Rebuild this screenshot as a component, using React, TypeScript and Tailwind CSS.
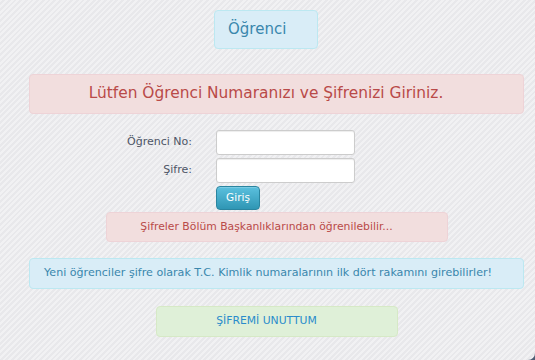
import React from "react";

const Alert = ({
  className,
  children,
}: {
  className: string;
  children: React.ReactNode;
}) => (
  <div
    className={`flex items-center whitespace-nowrap rounded-[4px] border pl-[14px] pr-[35px] ${className}`}
  >
    {children}
  </div>
);

const FormRow = ({ label, type }: { label: string; type: string }) => (
  <div className="flex items-center">
    <label className="w-[163px] text-right text-[11px] text-[#4d5566]">
      {label}
    </label>
    <input
      type={type}
      className="ml-[24px] h-[25px] w-[139px] rounded-[3px] border border-[#cccccc] bg-white px-1 text-[11px] shadow-[inset_0_1px_1px_rgba(0,0,0,0.075)] outline-none"
    />
  </div>
);

export default function App() {
  return (
    <div className="h-[360px] w-[535px] bg-[#4f5d74]">
      <div
        className="flex h-[360px] w-[535px] flex-col rounded-br-[7px] bg-[#ededf0] bg-[repeating-linear-gradient(135deg,#f1f1f3_0px,#f1f1f3_2px,#e8e8eb_2px,#e8e8eb_4px)] pl-[29px] pr-[11px] pt-[10px]"
        style={{ fontFamily: '"DejaVu Sans", Verdana, sans-serif' }}
      >
        <div className="ml-[185px] flex h-[39px] w-[104px] items-center rounded-[4px] border border-[#bce8f1] bg-[#d9edf7] pl-[13px] text-[15px] text-[#3a87ad]">
          Öğrenci
        </div>

        <Alert className="mt-[25px] h-[40px] justify-center border-[#eed3d7] bg-[#f2dede] text-[15.4px] text-[#b94a48]">
          Lütfen Öğrenci Numaranızı ve Şifrenizi Giriniz.
        </Alert>

        <div className="mt-[16px] flex flex-col gap-[3px]">
          <FormRow label="Öğrenci No:" type="text" />
          <FormRow label="Şifre:" type="password" />
          <button className="ml-[187px] h-[24px] w-[44px] rounded-[4px] border border-[#2a85a0] bg-[linear-gradient(#5bc0de,#2f96b4)] text-[10.5px] text-white shadow-[inset_0_1px_0_rgba(255,255,255,0.2)]">
            Giriş
          </button>
        </div>

        <Alert className="ml-[77px] mt-[2px] h-[30px] w-[342px] justify-center border-[#eed3d7] bg-[#f2dede] text-[10.8px] text-[#b94a48]">
          Şifreler Bölüm Başkanlıklarından öğrenilebilir...
        </Alert>

        <Alert className="mt-[16px] h-[31px] border-[#bce8f1] bg-[#d9edf7] text-[11.1px] text-[#3a87ad]">
          Yeni öğrenciler şifre olarak T.C. Kimlik numaralarının ilk dört rakamını girebilirler!
        </Alert>

        <Alert className="ml-[127px] mt-[17px] h-[31px] w-[242px] justify-center border-[#d6e9c6] bg-[#dff0d8] text-[10.8px]">
          <a href="#" className="text-[#2a8ccb]">
            ŞİFREMİ UNUTTUM
          </a>
        </Alert>
      </div>
    </div>
  );
}
